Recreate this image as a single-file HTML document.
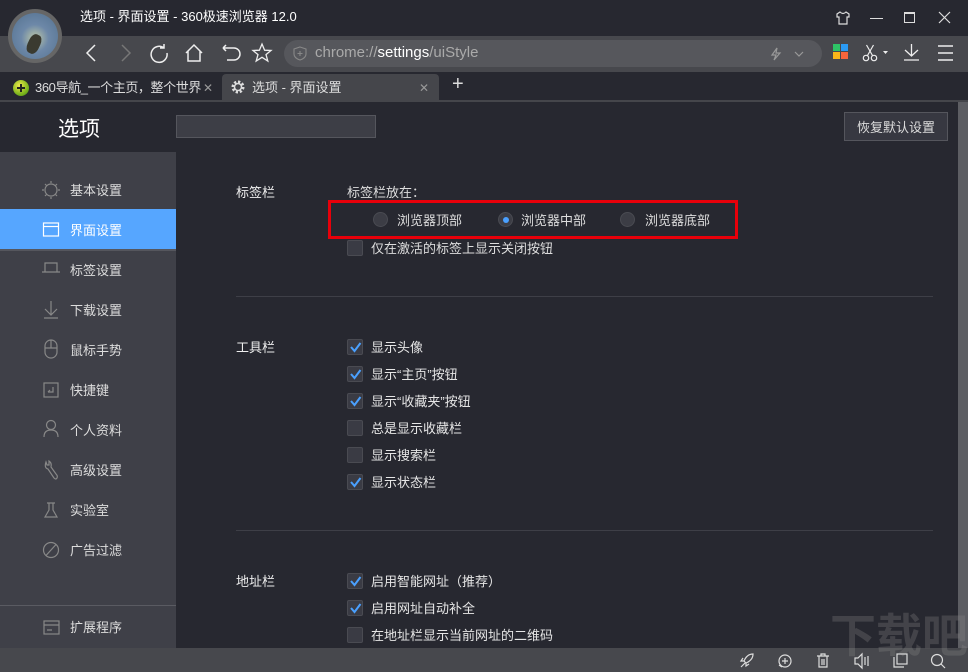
<!DOCTYPE html>
<html><head><meta charset="utf-8"><style>
*{margin:0;padding:0;box-sizing:border-box}
body{width:968px;height:672px;overflow:hidden;background:#272830;font-family:"Liberation Sans","Noto Sans CJK SC",sans-serif;font-size:13px;color:#e6e6e6;position:relative}
.a{position:absolute}
.t{position:absolute;white-space:nowrap;line-height:16px;margin-top:1px}
svg{position:absolute;overflow:visible}
.cb{position:absolute;width:16px;height:16px;border:1px solid #4a4b52;background:#3a3b44;border-radius:2px}
.rd{position:absolute;width:15px;height:15px;border-radius:50%;background:#3c3d45;border:1px solid #4a4b52}
</style></head><body>
<!-- title bar -->
<div class="a" style="left:0;top:0;width:968px;height:36px;background:#272830"></div>
<div class="t" style="left:80px;top:8px;font-size:13px;color:#fff">选项 - 界面设置 - 360极速浏览器 12.0</div>
<svg style="left:836px;top:11px" width="14" height="14"><path d="M4 1 L1 3 L1 6 L3 6 L3 13 L11 13 L11 6 L13 6 L13 3 L10 1 Q7 4 4 1Z" fill="none" stroke="#ddd" stroke-width="1.2"/></svg>
<div class="a" style="left:870px;top:18px;width:13px;height:1px;background:#ddd"></div>
<div class="a" style="left:904px;top:12px;width:11px;height:11px;border:1.5px solid #ddd;border-top-width:2px"></div>
<svg style="left:939px;top:12px" width="12" height="12"><path d="M0 0L11 11M11 0L0 11" stroke="#ddd" stroke-width="1.2"/></svg>
<!-- toolbar -->
<div class="a" style="left:0;top:36px;width:968px;height:36px;background:#47484d"></div>
<div class="a" style="left:8px;top:9px;width:54px;height:54px;border-radius:50%;background:#666;"></div>
<div class="a" style="left:12px;top:13px;width:46px;height:46px;border-radius:50%;background:radial-gradient(circle at 50% 55%,#9fb0a8 0 15%,#6d88a8 40%,#52708e 100%)"></div>
<div class="a" style="left:28px;top:34px;width:12px;height:20px;background:#3a3a30;border-radius:40%;transform:rotate(25deg)"></div>
<svg style="left:84px;top:44px" width="140" height="20" fill="none" stroke="#eee" stroke-width="1.5">
<path d="M11 1L3 9L11 17"/>
<path d="M38 1L46 9L38 17" stroke="#777"/>
<path d="M80 4A8 8 0 1 0 83 9M80 0V4H76"/>
<path d="M102 9L110 1L118 9M104 7V17H116V7"/>
<path d="M139 4H150A5 5 0 0 1 150 16H143M139 4L142 1M139 4L142 7"/>
</svg>
<svg style="left:252px;top:43px" width="20" height="20" fill="none" stroke="#eee" stroke-width="1.3"><path d="M10 1L12.6 7.2L19 7.5L14 11.6L15.8 18L10 14.3L4.2 18L6 11.6L1 7.5L7.4 7.2Z"/></svg>
<div class="a" style="left:284px;top:40px;width:538px;height:27px;border-radius:14px;background:#56575c"></div>
<svg style="left:293px;top:46px" width="14" height="15" fill="none" stroke="#888" stroke-width="1.1"><path d="M7 1L13 3V8Q13 12 7 14Q1 12 1 8V3Z"/><path d="M7 5V10M4.5 7.5H9.5"/></svg>
<div class="t" style="left:315px;top:44px;font-size:15px;color:#aaa">chrome://<span style="color:#fff">settings</span>/uiStyle</div>
<svg style="left:769px;top:47px" width="40" height="14" fill="none" stroke="#999" stroke-width="1.2"><path d="M8 1L3 8H7L5 13L11 6H7Z"/><path d="M26 5L30 9L34 5"/></svg>
<div class="a" style="left:833px;top:44px;width:7px;height:7px;background:#2ec366"></div>
<div class="a" style="left:841px;top:44px;width:7px;height:7px;background:#2b9af3"></div>
<div class="a" style="left:833px;top:52px;width:7px;height:7px;background:#f9b51a"></div>
<div class="a" style="left:841px;top:52px;width:7px;height:7px;background:#f6653c"></div>
<svg style="left:863px;top:44px" width="30" height="18" fill="none" stroke="#eee" stroke-width="1.2"><circle cx="3" cy="14" r="2.7"/><circle cx="11" cy="14" r="2.7"/><path d="M4.5 11.5L10.5 1M9.5 11.5L3.5 1"/><path d="M20 7H25L22.5 10Z" fill="#eee" stroke="none"/></svg>
<svg style="left:903px;top:44px" width="18" height="18" fill="none" stroke="#eee" stroke-width="1.3"><path d="M8.5 0V12M2 6L8.5 12L15 6M1 16H16"/></svg>
<svg style="left:938px;top:45px" width="16" height="16" stroke="#eee" stroke-width="1.4"><path d="M0 1H15M0 8H15M0 15H15"/></svg>
<!-- tabs -->
<div class="a" style="left:0;top:72px;width:968px;height:29px;background:#272830"></div>
<div class="a" style="left:0;top:100px;width:968px;height:2px;background:#45464b"></div>
<div class="a" style="left:222px;top:74px;width:217px;height:28px;background:#45464b;border-radius:4px 4px 0 0"></div>
<div class="a" style="left:13px;top:80px;width:16px;height:16px;border-radius:50%;background:radial-gradient(circle at 40% 35%,#f2e94c,#7fb61e 60%,#3c8a10)"></div>
<div class="a" style="left:17px;top:87px;width:8px;height:2px;background:#222"></div>
<div class="a" style="left:20px;top:84px;width:2px;height:8px;background:#222"></div>
<div class="t" style="left:35px;top:79px;color:#ddd;letter-spacing:-0.4px">360导航_一个主页，整个世界</div>
<div class="t" style="left:203px;top:79px;color:#999;font-size:12px">✕</div>
<svg style="left:230px;top:79px" width="16" height="16"><circle cx="8" cy="8" r="5" fill="none" stroke="#ddd" stroke-width="3" stroke-dasharray="2.2 1.7"/><circle cx="8" cy="8" r="3.5" fill="none" stroke="#ddd" stroke-width="1.5"/></svg>
<div class="t" style="left:252px;top:79px;color:#ddd">选项 - 界面设置</div>
<div class="t" style="left:419px;top:79px;color:#999;font-size:12px">✕</div>
<div class="t" style="left:452px;top:75px;font-size:20px;color:#ddd;font-weight:200">+</div>
<!-- header -->
<div class="t" style="left:58px;top:117px;font-size:21px;line-height:24px;color:#fff">选项</div>
<div class="a" style="left:176px;top:115px;width:200px;height:23px;background:#3d3e46;border:1px solid #55565d"></div>
<div class="a" style="left:844px;top:112px;width:104px;height:29px;background:#373841;border:1px solid #55565d"></div>
<div class="t" style="left:857px;top:119px;color:#ddd">恢复默认设置</div>
<div class="a" style="left:958px;top:102px;width:10px;height:546px;background:#5d5e63"></div>
<!-- sidebar -->
<div class="a" style="left:0;top:152px;width:176px;height:496px;background:#3f4048"></div>
<div class="a" style="left:0;top:209px;width:176px;height:40px;background:#56a6ff"></div>
<div class="a" style="left:0;top:249px;width:176px;height:2px;background:#55565d"></div>
<div class="a" style="left:0;top:605px;width:176px;height:1px;background:#5a5b62"></div>
<svg style="left:42px;top:180px" width="20" height="460" fill="none" stroke="#888" stroke-width="1.2">
<circle cx="9" cy="10" r="6"/><path d="M9 1V3M9 17V19M0 10H2M16 10H18M3 4L4.5 5.5M15 4L13.5 5.5M3 16L4.5 14.5M15 16L13.5 14.5"/>
<g stroke="#fff"><rect x="1.5" y="43" width="15" height="13"/><path d="M1.5 46.5H16.5"/></g>
<path d="M3 83V92H15V83ZM0 92H18"/>
<path d="M9 121V135M3 129L9 135L15 129M2 138H16"/>
<path d="M3 166A6 6 0 0 1 15 166V172A6 6 0 0 1 3 172ZM9 160V168M3 168H15"/>
<rect x="2" y="203" width="14" height="14"/><path d="M11 207V212H6M6 212L8 210"/>
<circle cx="9" cy="245" r="4.5"/><path d="M2 257Q2 250 9 250Q16 250 16 257"/>
<path d="M4 282Q2 288 6 289L12 298Q14 300 15 298Q16 296 14 294L9 287Q10 283 7 281L7 285L5 285Z"/>
<path d="M5 323H13M7 323V330L3 337H15L11 330V323"/>
<circle cx="9" cy="370" r="7.5"/><path d="M4 375.5L14 364.5"/>
<rect x="2" y="441" width="15" height="13"/><path d="M5 450H10M2 445H17"/>
</svg>
<div class="t" style="left:70px;top:182px;color:#ddd">基本设置</div>
<div class="t" style="left:70px;top:222px;color:#fff">界面设置</div>
<div class="t" style="left:70px;top:262px;color:#ddd">标签设置</div>
<div class="t" style="left:70px;top:302px;color:#ddd">下载设置</div>
<div class="t" style="left:70px;top:342px;color:#ddd">鼠标手势</div>
<div class="t" style="left:70px;top:382px;color:#ddd">快捷键</div>
<div class="t" style="left:70px;top:422px;color:#ddd">个人资料</div>
<div class="t" style="left:70px;top:462px;color:#ddd">高级设置</div>
<div class="t" style="left:70px;top:502px;color:#ddd">实验室</div>
<div class="t" style="left:70px;top:542px;color:#ddd">广告过滤</div>
<div class="t" style="left:70px;top:619px;color:#ddd">扩展程序</div>
<!-- main -->
<div class="t" style="left:236px;top:184px;color:#eee">标签栏</div>
<div class="t" style="left:347px;top:184px;color:#ddd">标签栏放在：</div>
<div class="a" style="left:328px;top:200px;width:410px;height:39px;border:3px solid #e8000a"></div>
<div class="rd" style="left:373px;top:212px"></div>
<div class="t" style="left:397px;top:212px;color:#ddd">浏览器顶部</div>
<div class="rd" style="left:498px;top:212px"></div>
<div class="a" style="left:503px;top:217px;width:6px;height:6px;border-radius:50%;background:#4aa0ff"></div>
<div class="t" style="left:521px;top:212px;color:#ddd">浏览器中部</div>
<div class="rd" style="left:620px;top:212px"></div>
<div class="t" style="left:645px;top:212px;color:#ddd">浏览器底部</div>
<div class="cb" style="left:347px;top:240px"></div>
<div class="t" style="left:371px;top:240px;color:#ddd">仅在激活的标签上显示关闭按钮</div>
<div class="a" style="left:236px;top:296px;width:697px;height:1px;background:#3e3f47"></div>
<div class="t" style="left:236px;top:339px;color:#eee">工具栏</div>
<div class="a" style="left:236px;top:530px;width:697px;height:1px;background:#3e3f47"></div>
<div class="t" style="left:236px;top:573px;color:#eee">地址栏</div>
<div class="cb" style="left:347px;top:339px"></div><div class="t" style="left:371px;top:339px">显示头像</div>
<div class="cb" style="left:347px;top:366px"></div><div class="t" style="left:371px;top:366px">显示“主页”按钮</div>
<div class="cb" style="left:347px;top:393px"></div><div class="t" style="left:371px;top:393px">显示“收藏夹”按钮</div>
<div class="cb" style="left:347px;top:420px"></div><div class="t" style="left:371px;top:420px">总是显示收藏栏</div>
<div class="cb" style="left:347px;top:447px"></div><div class="t" style="left:371px;top:447px">显示搜索栏</div>
<div class="cb" style="left:347px;top:474px"></div><div class="t" style="left:371px;top:474px">显示状态栏</div>
<div class="cb" style="left:347px;top:573px"></div><div class="t" style="left:371px;top:573px">启用智能网址（推荐）</div>
<div class="cb" style="left:347px;top:600px"></div><div class="t" style="left:371px;top:600px">启用网址自动补全</div>
<div class="cb" style="left:347px;top:627px"></div><div class="t" style="left:371px;top:627px">在地址栏显示当前网址的二维码</div>
<svg style="left:350px;top:342px" width="12" height="300" fill="none" stroke="#4aa0ff" stroke-width="2">
<path d="M1 5L4.5 9L10.5 1"/><path d="M1 32L4.5 36L10.5 28"/><path d="M1 59L4.5 63L10.5 55"/><path d="M1 140L4.5 144L10.5 136"/><path d="M1 239L4.5 243L10.5 235"/><path d="M1 266L4.5 270L10.5 262"/>
</svg>
<!-- status bar -->
<div class="a" style="left:0;top:648px;width:968px;height:24px;background:#47484d"></div>
<div class="t" style="left:830px;top:610px;font-size:46px;line-height:50px;color:rgba(140,140,140,0.28);font-weight:bold">下载吧</div>
<svg style="left:739px;top:653px" width="220" height="16" fill="none" stroke="#ddd" stroke-width="1.2">
<path d="M2 14L6 10M14 1Q8 1 5 8L7 10Q14 7 14 1ZM5 8L2 8L4 5M7 10L7 13L10 11"/>
<circle cx="46" cy="8" r="6"/><path d="M46 5V11M43 8H49M40 12L43 14"/>
<path d="M78 3H90M82 3V1H86V3M80 3V14H88V3M83 6V12M85 6V12"/>
<path d="M116 5H119L123 1V15L119 11H116ZM126 4V12M129 3V13"/>
<rect x="158" y="1" width="10" height="10"/><path d="M155 4V14H165"/>
<circle cx="198" cy="7" r="5.5"/><path d="M202 11L206 15"/>
</svg>
</body></html>
